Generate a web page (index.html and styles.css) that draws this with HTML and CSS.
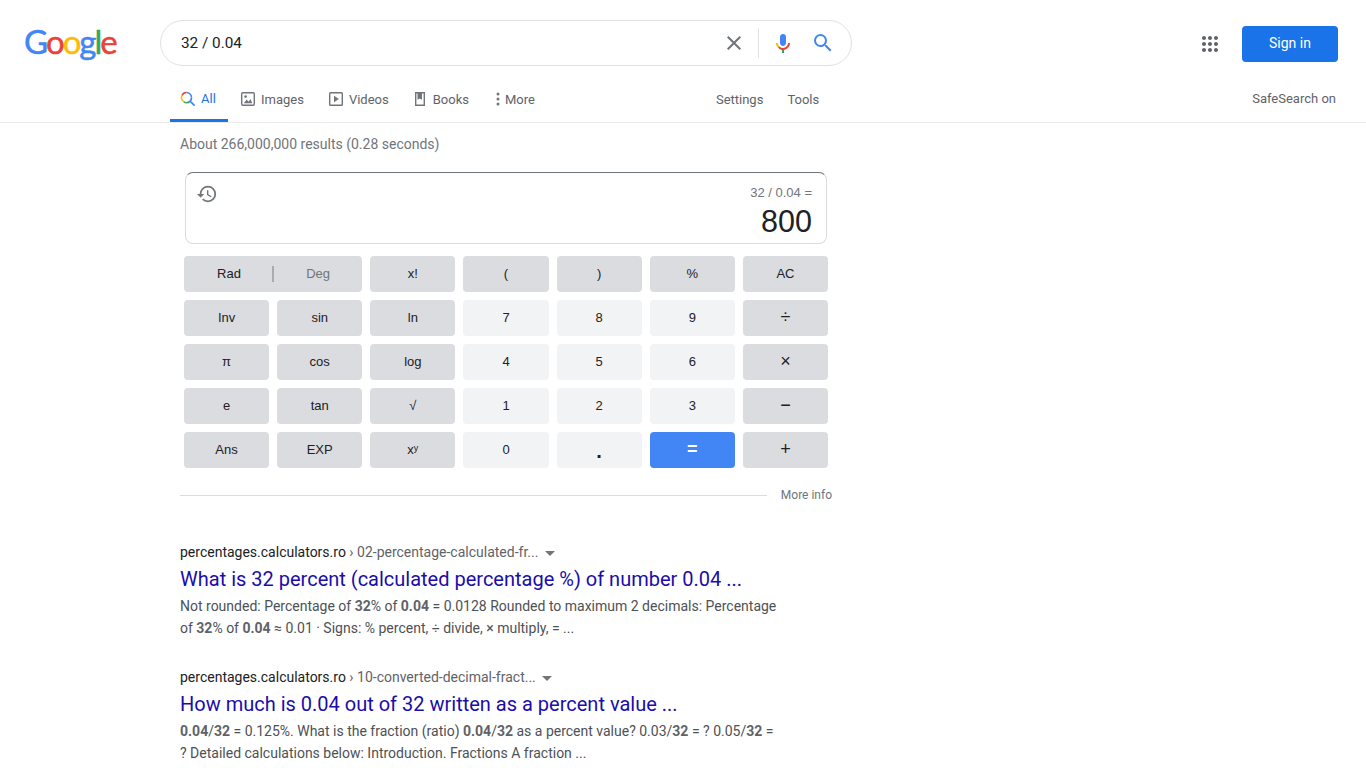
FILE: index.html
```html
<!DOCTYPE html>
<html lang="en">
<head>
<meta charset="utf-8">
<title>32 / 0.04 - Google Search</title>
<link rel="stylesheet" href="styles.css">
</head>
<body>
<header class="header">
  <div class="top">
    <a class="logo"><span class="b">G</span><span class="r">o</span><span class="y">o</span><span class="b">g</span><span class="g">l</span><span class="r">e</span></a>
    <div class="search">
      <span class="query">32 / 0.04</span>
      <svg class="ic-close" viewBox="0 0 24 24"><path fill="#70757a" d="M19 6.41 17.59 5 12 10.59 6.41 5 5 6.41 10.59 12 5 17.59 6.41 19 12 13.41 17.59 19 19 17.59 13.41 12z"/></svg>
      <span class="divider"></span>
      <svg class="ic-mic" viewBox="0 0 24 24"><path fill="#4285f4" d="M12 15c1.66 0 3-1.31 3-2.97V5.97C15 4.31 13.66 3 12 3S9 4.31 9 5.97v6.06C9 13.69 10.34 15 12 15z"/><path fill="#34a853" d="M11 18.08h2V22h-2z"/><path fill="#fbbc05" d="M7.05 16.87c-1.27-1.33-2.05-2.83-2.05-4.87h2c0 1.45.56 2.42 1.47 3.38v.32l-1.15 1.18z"/><path fill="#ea4335" d="M12 16.93a4.97 5.25 0 0 1-3.54-1.55l-1.41 1.49A6.95 7.2 0 0 0 11 18.93v-.01h2a6.9 7.2 0 0 0 4-2.06l-1.4-1.5A4.96 5.2 0 0 1 12 16.93z"/><path fill="#ea4335" d="M17 12c0 1.45-.56 2.42-1.46 3.38l1.42 1.5C18.22 15.55 19 14.05 19 12z"/></svg>
      <svg class="ic-search" viewBox="0 0 24 24"><path fill="#4285f4" d="M15.5 14h-.79l-.28-.27A6.47 6.47 0 0 0 16 9.5 6.5 6.5 0 1 0 9.5 16c1.61 0 3.09-.59 4.23-1.57l.27.28v.79l5 4.99L20.49 19l-4.99-5zm-6 0C7.01 14 5 11.99 5 9.5S7.01 5 9.5 5 14 7.01 14 9.5 11.99 14 9.5 14z"/></svg>
    </div>
    <svg class="ic-apps" viewBox="0 0 24 24"><path fill="#5f6368" d="M6 8c1.1 0 2-.9 2-2s-.9-2-2-2-2 .9-2 2 .9 2 2 2zm6 12c1.1 0 2-.9 2-2s-.9-2-2-2-2 .9-2 2 .9 2 2 2zm-6 0c1.1 0 2-.9 2-2s-.9-2-2-2-2 .9-2 2 .9 2 2 2zm0-6c1.1 0 2-.9 2-2s-.9-2-2-2-2 .9-2 2 .9 2 2 2zm6 0c1.1 0 2-.9 2-2s-.9-2-2-2-2 .9-2 2 .9 2 2 2zm4-8c0 1.1.9 2 2 2s2-.9 2-2-.9-2-2-2-2 .9-2 2zm-4 2c1.1 0 2-.9 2-2s-.9-2-2-2-2 .9-2 2 .9 2 2 2zm6 6c1.1 0 2-.9 2-2s-.9-2-2-2-2 .9-2 2 .9 2 2 2zm0 6c1.1 0 2-.9 2-2s-.9-2-2-2-2 .9-2 2 .9 2 2 2z"/></svg>
    <a class="signin">Sign in</a>
  </div>
  <nav class="nav">
    <a class="tab tab-active">
      <svg class="tab-icon" viewBox="0 0 16 16"><path fill="none" stroke="#4285f4" stroke-width="1.5" d="M6.5 1.5a5 5 0 0 1 5 5"/><path fill="none" stroke="#ea4335" stroke-width="1.5" d="M6.5 1.5a5 5 0 0 0-4.6 3"/><path fill="none" stroke="#fbbc05" stroke-width="1.5" d="M1.9 4.5a5 5 0 0 0 1.6 6"/><path fill="none" stroke="#34a853" stroke-width="1.5" d="M3.5 10.5a5 5 0 0 0 6.6-.4"/><path fill="none" stroke="#4285f4" stroke-width="1.7" d="M10.1 10.1 14.6 14.6M11.5 6.5a5 5 0 0 1-1.4 3.6"/></svg>
      All
    </a>
    <a class="tab">
      <svg class="tab-icon" viewBox="0 0 16 16"><path fill="none" stroke="#70757a" stroke-width="1.4" d="M2.900 1.700h10.200q1.200 0 1.200 1.200v10.200q0 1.200-1.200 1.200H2.900q-1.200 0-1.200-1.200V2.900q0-1.200 1.200-1.200z"/><circle fill="#70757a" cx="5.600" cy="5.600" r="1.300"/><path fill="#70757a" d="M3.800 12.300 6.700 8.600l1.800 2.100 2-2.600 1.700 4.200z"/></svg>
      Images
    </a>
    <a class="tab">
      <svg class="tab-icon" viewBox="0 0 16 16"><path fill="none" stroke="#70757a" stroke-width="1.4" d="M2.500 1.700h11q.8 0 .8.8v11q0 .8-.8.8h-11q-.8 0-.8-.8v-11q0-.8.8-.8z"/><path fill="#70757a" d="M6 4.800v6.400l4.900-3.200z"/></svg>
      Videos
    </a>
    <a class="tab">
      <svg class="tab-icon tab-book" viewBox="0 0 12 16"><path fill="none" stroke="#70757a" stroke-width="1.400" d="M1.700 1.700h8.600v12.600H1.700z"/><path fill="#70757a" d="M3.500 1.700h4.500v7.100l-2.250-1.400-2.250 1.400z"/></svg>
      Books
    </a>
    <a class="tab tab-more">
      <svg class="dots" viewBox="0 0 4 16"><circle fill="#70757a" cx="2" cy="3" r="1.500"/><circle fill="#70757a" cx="2" cy="8" r="1.500"/><circle fill="#70757a" cx="2" cy="13" r="1.500"/></svg>
      More
    </a>
    <a class="tab tab-settings">Settings</a>
    <a class="tab tab-tools">Tools</a>
    <a class="safe">SafeSearch on</a>
  </nav>
</header>
<main class="main">
  <div class="stats">About 266,000,000 results (0.28 seconds)</div>
  <section class="calc">
    <div class="display">
      <svg class="ic-history" viewBox="0 0 24 24"><path fill="#70757a" d="M13 3a9 9 0 0 0-9 9H1l3.890 3.890.07.140L9 12H6c0-3.870 3.130-7 7-7s7 3.130 7 7-3.130 7-7 7c-1.930 0-3.680-.79-4.940-2.060l-1.420 1.420A8.954 8.954 0 0 0 13 21a9 9 0 0 0 0-18zm-1 5v5l4.280 2.540.72-1.210-3.500-2.080V8H12z"/></svg>
      <div class="expr">32 / 0.04 =</div>
      <div class="value">800</div>
    </div>
    <div class="keys">
      <div class="key dark key-wide"><span class="rad">Rad</span><span class="sep"></span><span class="deg">Deg</span></div>
      <div class="key dark">x!</div>
      <div class="key dark">(</div>
      <div class="key dark">)</div>
      <div class="key dark">%</div>
      <div class="key dark">AC</div>
      <div class="key dark">Inv</div>
      <div class="key dark">sin</div>
      <div class="key dark">ln</div>
      <div class="key light">7</div>
      <div class="key light">8</div>
      <div class="key light">9</div>
      <div class="key dark big">÷</div>
      <div class="key dark">π</div>
      <div class="key dark">cos</div>
      <div class="key dark">log</div>
      <div class="key light">4</div>
      <div class="key light">5</div>
      <div class="key light">6</div>
      <div class="key dark big">×</div>
      <div class="key dark">e</div>
      <div class="key dark">tan</div>
      <div class="key dark">√</div>
      <div class="key light">1</div>
      <div class="key light">2</div>
      <div class="key light">3</div>
      <div class="key dark big">−</div>
      <div class="key dark">Ans</div>
      <div class="key dark">EXP</div>
      <div class="key dark"><span>x<sup class="sup">y</sup></span></div>
      <div class="key light">0</div>
      <div class="key light dot">.</div>
      <div class="key blue">=</div>
      <div class="key dark big">+</div>
    </div>
    <div class="more-info"><span class="rule"></span><span class="more-text">More info</span></div>
  </section>
  <article class="result r1">
    <div class="cite"><span class="host">percentages.calculators.ro</span> › 02-percentage-calculated-fr... <span class="caret"></span></div>
    <h3 class="title">What is 32 percent (calculated percentage %) of number 0.04 ...</h3>
    <p class="snippet">Not rounded: Percentage of <b>32</b>% of <b>0.04</b> = 0.0128 Rounded to maximum 2 decimals: Percentage of <b>32</b>% of <b>0.04</b> ≈ 0.01 · Signs: % percent, ÷ divide, × multiply, = ...</p>
  </article>
  <article class="result r2">
    <div class="cite"><span class="host">percentages.calculators.ro</span> › 10-converted-decimal-fract... <span class="caret"></span></div>
    <h3 class="title">How much is 0.04 out of 32 written as a percent value ...</h3>
    <p class="snippet"><b>0.04</b>/<b>32</b> = 0.125%. What is the fraction (ratio) <b>0.04</b>/<b>32</b> as a percent value? 0.03/<b>32</b> = ? 0.05/<b>32</b> = ? Detailed calculations below: Introduction. Fractions A fraction ...</p>
  </article>
</main>
</body>
</html>
```
FILE: styles.css
```css
* { box-sizing: border-box; }
html, body { margin: 0; padding: 0; height: 768px; overflow: hidden; background: #fff; }
body { font-family: Roboto, "Liberation Sans", Arial, sans-serif; color: #202124; }
.header { height: 123px; border-bottom: 1px solid #ebebeb; }
.top { display: flex; align-items: flex-start; height: 78px; padding-top: 20px; }
.logo { width: 160px; padding-left: 24px; font-family: Lato, sans-serif; font-size: 33px; line-height: 42px; letter-spacing: -2px; font-weight: 400; -webkit-text-stroke: 0.5px; }
.b { color: #4285f4; }
.r { color: #ea4335; }
.y { color: #fbbc05; }
.g { color: #34a853; }
.search { width: 692px; height: 46px; border: 1px solid #dfe1e5; border-radius: 23px; display: flex; align-items: center; padding-left: 20px; }
.query { flex: 1; font-size: 15.3px; color: #202124; }
.ic-close { width: 24px; height: 24px; margin-right: 12px; }
.divider { width: 1px; height: 30px; background: #dfe1e5; margin-right: 12px; }
.ic-mic { width: 24px; height: 24px; margin-right: 16px; }
.ic-search { width: 24px; height: 24px; margin-right: 16px; }
.ic-apps { width: 24px; height: 24px; margin: 12px 20px 0 346px; }
.signin { width: 96px; height: 36px; margin-top: 6px; background: #1a73e8; color: #fff; border-radius: 4px; font-size: 14px; line-height: 35px; text-align: center; }
.nav { display: flex; height: 44px; padding-left: 170px; font-size: 13px; color: #5f6368; }
.tab { display: flex; align-items: center; height: 44px; padding: 0 0 2px 13px; }
.tab-active { width: 58px; padding: 0 0 0 11px; color: #1a73e8; border-bottom: 3px solid #1a73e8; }
.tab-icon { width: 16px; height: 16px; margin-right: 5px; margin-left: -1px; }
.tab-book { width: 12px; margin-right: 7px; margin-left: 0; }
.tab:nth-child(3) { padding-left: 25px; }
.tab:nth-child(4) { padding-left: 25px; }
.tab-more { padding-left: 27px; }
.dots { width: 4px; height: 16px; margin-right: 5px; }
.tab-settings { padding-left: 181px; }
.tab-tools { padding-left: 24px; }
.safe { margin-left: auto; margin-right: 30px; line-height: 42px; }
.main { padding-left: 180px; }
.stats { font-size: 14px; line-height: 22px; color: #70757a; padding-top: 10px; height: 49px; }
.calc { width: 652px; }
.display { position: relative; width: 642px; height: 72px; margin-left: 5px; border: 1px solid #dadce0; border-top-color: #70757a; border-radius: 8px; text-align: right; padding: 12px 14px 0 0; font-family: "Liberation Sans", Arial, sans-serif; }
.ic-history { position: absolute; left: 10px; top: 10px; width: 22px; height: 22px; }
.expr { font-size: 13px; line-height: 15px; color: #70757a; }
.value { font-size: 30.5px; line-height: 36px; margin-top: 3px; color: #202124; }
.keys { display: grid; grid-template-columns: repeat(7, 1fr); grid-auto-rows: 36px; gap: 8px; width: 644px; margin: 12px 0 0 4px; font-family: "Liberation Sans", Arial, sans-serif; }
.key { display: flex; align-items: center; justify-content: center; border-radius: 4px; font-size: 13px; color: #202124; padding-bottom: 1px; }
.dark { background: #dadce0; }
.light { background: #f1f3f4; }
.blue { background: #4285f4; color: #fff; font-size: 18px; font-weight: 700; }
.big { font-size: 18px; }
.dot { font-size: 20px; font-weight: 700; padding-top: 3px; }
.key-wide { grid-column: span 2; justify-content: flex-start; }
.rad { width: 88px; padding-left: 2px; text-align: center; }
.sep { width: 2px; height: 16px; background: #a8abb0; }
.deg { flex: 1; text-align: center; color: #70757a; }
.sup { font-size: 9px; line-height: 0; vertical-align: 3px; }
.more-info { display: flex; align-items: center; margin-top: 18px; height: 18px; }
.rule { flex: 1; height: 1px; background: #dadce0; margin-top: 1px; }
.more-text { font-size: 12px; color: #70757a; margin-left: 14px; }
.result { width: 600px; }
.r1 { margin-top: 37px; }
.r2 { margin-top: 27px; }
.cite { font-size: 14px; line-height: 22px; color: #5f6368; white-space: nowrap; }
.host { color: #202124; }
.caret { display: inline-block; width: 0; height: 0; margin-left: 3px; vertical-align: 1px; border-left: 5px solid transparent; border-right: 5px solid transparent; border-top: 5px solid #70757a; }
.title { margin: 3px 0 3px; font-size: 20px; line-height: 26px; font-weight: 400; color: #1a0dab; white-space: nowrap; }
.snippet { margin: 0; font-size: 14px; line-height: 22px; color: #4d5156; }
.snippet b { font-weight: 700; color: #5f6368; }
```
